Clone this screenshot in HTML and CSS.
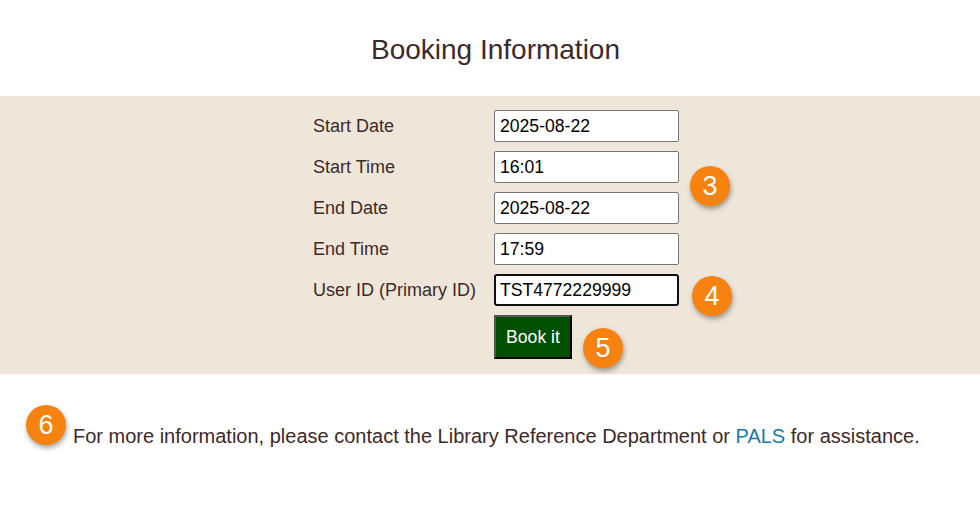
FILE: index.html
```html
<!DOCTYPE html>
<html lang="en">
<head>
<meta charset="utf-8">
<title>Booking Information</title>
<link rel="stylesheet" href="styles.css">
</head>
<body>
<header class="page-header">
  <h1 class="title">Booking Information</h1>
</header>
<section class="band">
  <form class="booking-form">
    <label class="field-label" for="sd">Start Date</label>
    <input class="field-input" id="sd" type="text" value="2025-08-22">
    <label class="field-label" for="st">Start Time</label>
    <input class="field-input" id="st" type="text" value="16:01">
    <label class="field-label" for="ed">End Date</label>
    <input class="field-input" id="ed" type="text" value="2025-08-22">
    <label class="field-label" for="et">End Time</label>
    <input class="field-input" id="et" type="text" value="17:59">
    <label class="field-label" for="uid">User ID (Primary ID)</label>
    <input class="field-input field-focus" id="uid" type="text" value="TST4772229999">
    <span class="spacer"></span>
    <div class="button-cell"><button class="book-btn" type="button">Book it</button></div>
  </form>
</section>
<p class="footer-note">For more information, please contact the Library Reference Department or <a class="link" href="#">PALS</a> for assistance.</p>

<span class="badge badge-3">3</span>
<span class="badge badge-4">4</span>
<span class="badge badge-5">5</span>
<span class="badge badge-6">6</span>
</body>
</html>
```

FILE: styles.css
```css
html, body {
  margin: 0;
  padding: 0;
  background: #ffffff;
}
body {
  position: relative;
  width: 980px;
  height: 516px;
  overflow: hidden;
  font-family: "Liberation Sans", Arial, sans-serif;
  color: #3d2929;
}
.page-header {
  height: 96px;
  display: flex;
  align-items: center;
  justify-content: center;
  box-sizing: border-box;
  padding-top: 3px;
  padding-left: 11px;
}
.title {
  margin: 0;
  font-size: 28px;
  font-weight: normal;
  color: #3d2929;
}
.band {
  background: #efe6da;
  padding: 14px 0 15px;
}
.booking-form {
  display: grid;
  grid-template-columns: 181px 185px;
  row-gap: 9px;
  align-items: baseline;
  width: 366px;
  padding-left: 12px;
  margin: 0 auto;
}
.field-label {
  font-size: 18px;
  color: #3d2929;
}
.field-input {
  box-sizing: border-box;
  width: 185px;
  height: 32px;
  margin: 0;
  padding: 1px 5px;
  font-family: "Liberation Sans", Arial, sans-serif;
  font-size: 17.6px;
  color: #000;
  background: #fff;
  border: 1px solid #767676;
  border-radius: 2px;
  outline: none;
}
.field-focus {
  border: 2px solid #101010;
  border-radius: 3px;
  padding: 0 4px;
}
.button-cell {
  display: flex;
}
.book-btn {
  box-sizing: border-box;
  width: 78px;
  height: 44px;
  margin: 0;
  padding: 0 10px;
  font-family: "Liberation Sans", Arial, sans-serif;
  font-size: 17.6px;
  color: #ffffff;
  background: #005000;
  border: 2px solid;
  border-color: #555555 #000000 #000000 #555555;
  cursor: pointer;
}
.footer-note {
  margin: 51px 0 0;
  padding-left: 73px;
  font-size: 20px;
  color: #3d2929;
}
.link {
  color: #1b7aa6;
  text-decoration: none;
}
.badge {
  position: absolute;
  width: 40px;
  height: 40px;
  border-radius: 50%;
  background: #f7820f;
  color: #ffffff;
  font-family: "Liberation Sans", Arial, sans-serif;
  font-size: 27px;
  line-height: 40px;
  text-align: center;
  box-shadow: 1px 3px 5px rgba(0, 0, 0, 0.35);
}
.badge-3 { left: 690px; top: 166px; }
.badge-4 { left: 692px; top: 276px; }
.badge-5 { left: 583px; top: 328px; }
.badge-6 { left: 26px; top: 405px; }
```
